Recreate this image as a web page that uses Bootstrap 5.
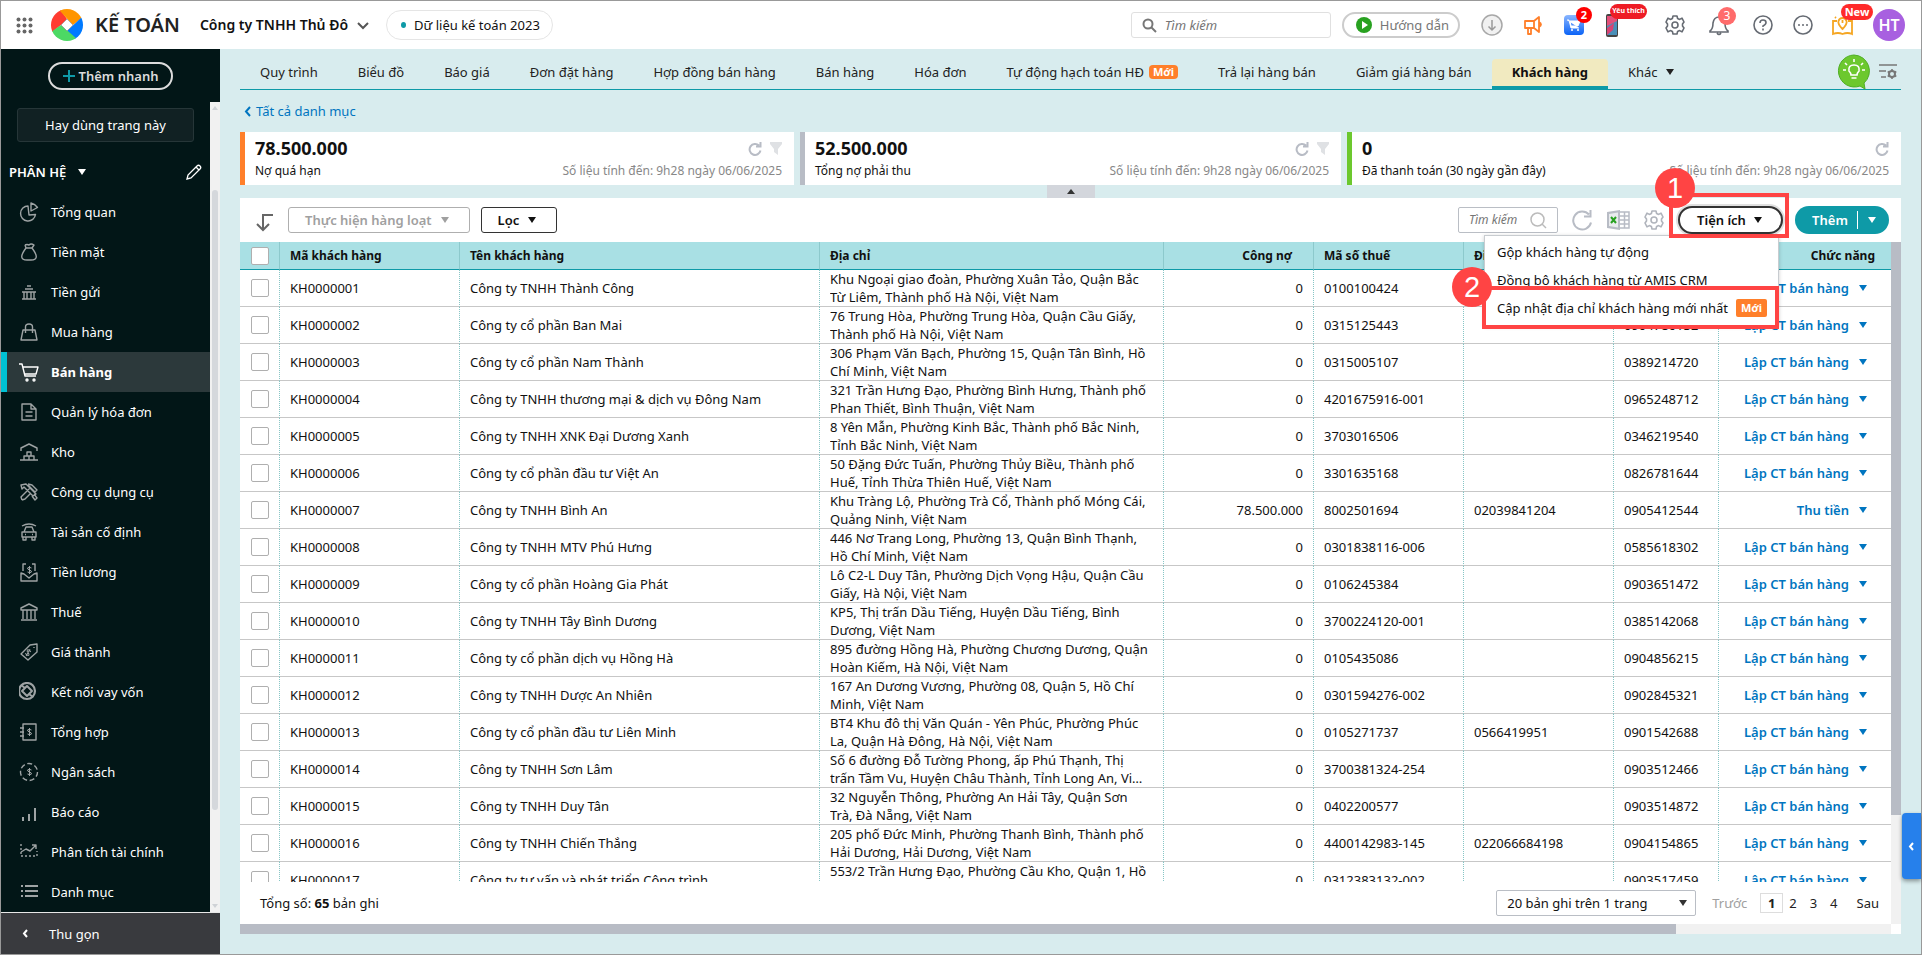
<!DOCTYPE html>
<html lang="vi">
<head>
<meta charset="utf-8">
<meta name="viewport" content="width=device-width, initial-scale=1">
<title>Kế toán - Khách hàng</title>
<link href="https://cdn.jsdelivr.net/npm/bootstrap@5.3.0/dist/css/bootstrap.min.css" rel="stylesheet">
<style>
  body { font-family: "Noto Sans", sans-serif; font-size: 13px; line-height: 18px; color: #111; }
  svg { display: block; flex: none; }
  button, input, select { font: inherit; color: inherit; }
  .semi { font-weight: 600; }
  .app { height: 100vh; border: 1px solid #999; background: #fff; overflow: hidden; }
  .caret { display: inline-block; border: 4px solid transparent; border-top: 6px solid currentColor; border-bottom: 0; flex: none; }

  /* top bar */
  .topbar { height: 48px; flex: none; padding: 0 16px 0 15px; }
  .brand-name { font-size: 20px; font-weight: 600; color: #222; }
  .company { font-size: 14px; font-weight: 600; background: none; border: 0; padding: 0; }
  .year-pill { height: 30px; border: 1px solid #e5e5e5; border-radius: 15px; background: #fff; padding: 0 12px 0 14px; }
  .dot { width: 5px; height: 6px; border-radius: 50%; background: #0e9aa7; }
  .top-search { width: 200px; height: 26px; border: 1px solid #e0e0e0; border-radius: 3px; padding: 0 10px; }
  .top-search input, .list-search input { border: 0; outline: 0; min-width: 0; width: 100%; background: none; padding: 0; }
  .top-search input::placeholder, .list-search input::placeholder { font-style: italic; color: #757575; opacity: 1; }
  .guide { height: 26px; border: 2px solid #ccc; border-radius: 13px; background: #fff; color: #777; padding: 0 9px 0 12px; }
  .icon-btn { border: 0; background: none; padding: 0; position: relative; display: flex; align-items: center; justify-content: center; }
  .bubble { position: absolute; color: #fff; font-weight: 700; text-align: center; border-radius: 9px; }
  .avatar { width: 32px; height: 32px; border-radius: 50%; background: #a860e0; color: #fff; font-weight: 600; font-size: 16px; }

  /* sidebar */
  .side { width: 219px; background: #021617; color: #fff; flex: none; }
  .quick { height: 53px; flex: none; }
  .quick button { height: 28px; width: 125px; border: 2px solid #dcdcdc; border-radius: 14px; background: none; color: #dcdcdc; font-weight: 600; padding: 0; }
  .often { margin: 6px 16px 10px; height: 34px; flex: none; border: 1px solid #263638; border-radius: 3px; background: #112123; color: #fff; padding: 0; }
  .group-head { height: 40px; flex: none; padding: 0 8px 0 8px; }
  .side-link { height: 40px; flex: none; padding-left: 18px; gap: 12px; color: #fff; text-decoration: none; }
  .side-link svg { color: #9ea3a4; }
  .side-link.current { background: #2c393b; border-left: 6px solid #00c1d4; padding-left: 12px; font-weight: 700; }
  .side-link.current svg { color: #fff; }
  .side-bar { width: 10px; background: #f1f1f1; padding: 4px 0; flex: none; }
  .side-thumb { width: 6px; height: 620px; border-radius: 3px; background: #d5d8dc; margin-top: 80px; }
  .fold { height: 42px; flex: none; background: #393a3e; border: 0; border-top: 1px solid #e8e8e8; color: #fff; padding-left: 21px; gap: 20px; }

  /* main */
  .main { background: #d8ecee; padding: 0 20px 20px 20px; }
  .main > nav, .main > a, .summary, .collapse-row, .tool, .pager-row, .hbar { flex: none; }
  .tabs { height: 41px; padding: 10px 2px 0 0; border-bottom: 1px solid #0e9aa7; }
  .tabs a { color: #222; text-decoration: none; padding: 0 20px 2px; display: flex; align-items: center; border-bottom: 3px solid transparent; }
  .tabs a.current { background: #f1eac0; border-radius: 4px 4px 0 0; border-bottom-color: #0e9aa7; font-weight: 700; color: #111; }
  .new-tag { background: #ff7f2a; color: #fff; font-weight: 700; font-size: 11px; line-height: 14px; padding: 0 5px; border-radius: 4px; }
  .tabs .new-tag { padding: 0 4px; margin-left: 5px; }
  .back { height: 42px; color: #0075c0; text-decoration: none; padding-left: 4px; }
  .summary { display: grid; grid-template-columns: 554fr 541fr 554fr; gap: 6px; }
  .sum { background: #fff; border-left: 5px solid; height: 53px; padding: 4px 12px 4px 10px; font-size: 12px; }
  .sum strong { font-size: 18px; line-height: 24px; margin-bottom: 2px; }
  .note { color: #888; }
  .collapse-row { height: 13px; }
  .collapse-row button { width: 48px; height: 13px; border: 0; background: #d3d6dc; padding: 0; color: #333; }
  .tool { height: 44px; padding: 0 12px 0 16px; }
  .obtn { height: 26px; border: 1px solid #333; border-radius: 3px; background: #fff; font-weight: 600; padding: 0 20px 0 16px; gap: 9px; }
  .obtn:disabled { border-color: #afafaf; color: #a0a0a0; }
  .list-search { width: 100px; height: 26px; border: 1px solid #babec5; border-radius: 2px; padding: 0 10px; font-size: 12px; }
  .util { width: 105px; height: 28px; border: 2px solid #333; border-radius: 14px; background: #fff; font-weight: 600; padding: 0 2px 0 0; box-shadow: 0 0 0 2px #e0e0e0; gap: 8px; }
  .add { height: 28px; width: 94px; border-radius: 14px; background: #0e9aa7; color: #fff; overflow: hidden; }
  .add button { border: 0; background: none; color: #fff; font-weight: 600; padding: 0; }
  .add .more { display: flex; align-items: center; justify-content: center; width: 32px; padding-right: 4px; border-left: 1px solid #fff; height: 18px; }

  .grid { table-layout: fixed; border-collapse: separate; border-spacing: 0; width: 100%; margin: 0; }
  .grid th { background: #a9e0e4; height: 28px; padding: 0 10px; border: 0; border-bottom: 1px solid #0e9aa7; border-right: 1px solid #8cc9cc; font-weight: 700; font-size: 12px; }
  .grid td { height: 37px; padding: 0 10px; border: 0; border-bottom: 1px solid #c7c7c7; border-right: 1px dotted #86c5c5; vertical-align: middle; white-space: nowrap; }
  .grid th:first-child, .grid td:first-child { padding-left: 11px; }
  .grid th:last-child, .grid td:last-child { border-right: 0; }
  .grid .tick { width: 18px; height: 18px; margin: 0; display: block; border: 1px solid #afafaf; border-radius: 2px; background-color: #fff; }
  .addr { display: -webkit-box; -webkit-box-orient: vertical; -webkit-line-clamp: 2; overflow: hidden; white-space: normal; margin-right: 4px; }
  .act { color: #0075c0; font-weight: 600; }
  .act a { color: inherit; text-decoration: none; }
  .act .wrap { display: flex; align-items: center; justify-content: flex-end; gap: 10px; padding-right: 14px; }
  .act button { border: 0; background: none; padding: 0; color: inherit; display: flex; }
  .pager-row { height: 42px; padding: 0 12px 0 20px; }
  .page-size { width: 200px; height: 26px; border: 1px solid #babec5; border-radius: 2px; padding: 0 10px; appearance: none; background: #fff url("data:image/svg+xml,%3Csvg xmlns='http://www.w3.org/2000/svg' width='8' height='6'%3E%3Cpath d='M0 0h8L4 6z' fill='%23333'/%3E%3C/svg%3E") no-repeat right 8px center; }
  .pager a { color: #222; text-decoration: none; }
  .pager .on { border: 1px solid #ddd; width: 23px; height: 20px; text-align: center; font-weight: 700; }
  .vbar { width: 10px; flex: none; background: #f1f1f1; }
  .vbar div { height: 84%; background: #b8bcc5; }
  .hbar { height: 10px; background: #f1f1f1; margin-right: 10px; }
  .hbar div { width: 87%; height: 10px; background: #b8bcc5; }

  /* open menu and the numbered call-outs */
  .menu { position: absolute; top: 29px; right: 4px; width: 295px; background: #fff; border: 1px solid #c8ccd0; box-shadow: 0 1px 4px rgba(0,0,0,.2); padding: 2px 0 3px; z-index: 3; white-space: nowrap; }
  .menu a { height: 28px; padding: 0 12px; color: #111; text-decoration: none; }
  .menu .new-tag { line-height: 18px; border-radius: 2px; }
  .ring { position: absolute; border: 4px solid #ff4444; z-index: 4; pointer-events: none; }
  .ring-1 { top: -13px; right: -6px; bottom: -4px; left: -9px; }
  .ring-2 { top: 50px; right: -1px; bottom: -4px; left: -3px; }
  .num { position: absolute; left: -18px; top: -29px; width: 40px; height: 40px; border-radius: 50%; background: #ff4444; color: #fff; font: 29px/40px "Liberation Sans", sans-serif; text-align: center; }
  .ring-2 .num { left: -34px; top: -23px; }
  .side-tab { position: fixed; right: 1px; bottom: 76px; width: 19px; height: 66px; border: 0; padding: 0; border-radius: 4px 0 0 4px; background: #2680eb; color: #fff; box-shadow: 0 2px 4px rgba(0,0,0,.4); }
</style>
</head>
<body>
<div class="app d-flex flex-column">
  <header class="topbar d-flex align-items-center justify-content-between">
    <div class="d-flex align-items-center">
      <button class="icon-btn me-3" aria-label="Ứng dụng"><svg width="17" height="17" fill="#666"><circle cx="2.5" cy="2.5" r="2"/><circle cx="8.5" cy="2.5" r="2"/><circle cx="14.500" cy="2.5" r="2"/><circle cx="2.5" cy="8.500" r="2"/><circle cx="8.500" cy="8.500" r="2"/><circle cx="14.500" cy="8.500" r="2"/><circle cx="2.5" cy="14.500" r="2"/><circle cx="8.500" cy="14.500" r="2"/><circle cx="14.500" cy="14.500" r="2"/></svg></button>
      <svg style="margin-left:2px" width="32" height="32" viewBox="0 0 32 32"><defs><clipPath id="disc"><circle cx="16" cy="16" r="16"/></clipPath></defs><g clip-path="url(#disc)"><path d="M0 0h9l7 10-6 6L0 24z" fill="#ff3b30"/><path d="M9 0h23v8L22 16 9 2z" fill="#ff9500"/><path d="M32 7v25h-7l-9-10z" fill="#007aff"/><path d="M0 23l10-7 16 14-4 4H0z" fill="#4cd964"/></g><path d="M16 10l6 6-6 6-6-6z" fill="#fff" stroke="#666" stroke-width="0.500"/></svg>
      <span class="brand-name ms-2 ps-1">KẾ TOÁN</span>
      <button class="company d-flex align-items-center gap-2" style="margin-left:20px">Công ty TNHH Thủ Đô <svg width="14" height="9" fill="none" stroke="#555" stroke-width="2"><path d="M2 2l5 5 5-5"/></svg></button>
      <button class="year-pill d-flex align-items-center gap-2 ms-3"><span class="dot"></span>Dữ liệu kế toán 2023</button>
    </div>
    <div class="d-flex align-items-center">
      <div class="top-search d-flex align-items-center gap-2 me-2"><svg width="15" height="15" fill="none" stroke="#777" stroke-width="2"><circle cx="6" cy="6" r="4.500"/><path d="M9.500 9.500L14 14"/></svg><input type="text" placeholder="Tìm kiếm" aria-label="Tìm kiếm"></div>
      <button class="guide d-flex align-items-center gap-2" style="margin-left:3px"><svg width="16" height="16"><circle cx="8" cy="8" r="8" fill="#28a120"/><path d="M6 4l6 4-6 4z" fill="#fff"/></svg>Hướng dẫn</button>
      <div class="d-flex align-items-center" id="topIcons">
        <button class="icon-btn" style="margin-left:21px" aria-label="Tải về"><svg width="22" height="22" fill="#f1f1f1" stroke="#a8a8a8" stroke-width="1.500"><circle cx="11" cy="11" r="10"/><path d="M11 6v10M7.500 12.500L11 16l3.500-3.500" fill="none" stroke="#999"/></svg></button>
        <button class="icon-btn" style="margin-left:21px" aria-label="Thông báo"><svg width="20" height="20" fill="none" stroke="#ff7f2a" stroke-width="1.800" stroke-linejoin="round"><path d="M1 6h9v7H1zM10 6l5-4v15l-5-4M4 13v6h3v-6M15 7q4 2.500 0 5"/></svg></button>
        <button class="icon-btn" style="margin-left:20px" aria-label="Giỏ hàng"><svg width="20" height="20"><defs><linearGradient id="bl" x2="0" y2="1"><stop stop-color="#8ab6ff"/><stop offset="1" stop-color="#0b63f6"/></linearGradient></defs><rect width="20" height="20" rx="4" fill="url(#bl)"/><path d="M3 5h2l2 8h8M6 6h10l-2 5H7z" fill="#fff" stroke="#fff"/><circle cx="8" cy="15" r="1" fill="#fff"/><circle cx="14" cy="15" r="1" fill="#fff"/></svg><span class="bubble" style="width:16px;height:16px;line-height:16px;font-size:11px;background:#f00;left:12px;top:-8px">2</span></button>
        <button class="icon-btn" style="margin-left:22px" aria-label="Yêu thích"><svg width="12" height="23"><rect x="0" y="0" width="12" height="23" rx="2" fill="#444"/><rect x="1" y="2" width="10" height="10" fill="#e44f79"/><path d="M1 12L11 7v14H1z" fill="#4a8fb8"/><path d="M1 14l7-5-1 7-6 5z" fill="#d74374"/></svg><span class="bubble" style="width:37px;height:15px;line-height:14px;font-size:7px;background:#ee1c25;left:4px;top:-10px">Yêu thích</span></button>
        <button class="icon-btn" style="margin-left:47px" aria-label="Cài đặt"><svg width="20" height="20" viewBox="0 0 20 20" fill="none" stroke="#666b73" stroke-width="1.600" stroke-linejoin="round"><path id="cog" d="M8 1h4l.6 2.500 2 .9L17 3.200 19 7l-1.500 2v2L19 13l-2 3.800-2.400-1.200-2 .9L12 19H8l-.6-2.500-2-.9L3 16.800 1 13l1.500-2V9L1 7l2-3.800 2.400 1.200 2-.9z"/><circle cx="10" cy="10" r="3"/></svg></button>
        <button class="icon-btn" style="margin-left:24px" aria-label="Chuông"><svg width="20" height="21" fill="none" stroke="#666b73" stroke-width="1.600"><path d="M1 16q3-2 3-8 1-6 6-6t6 6q0 6 3 8v1H1zM8 18q2 3 4 0"/></svg><span class="bubble" style="width:18px;height:18px;line-height:18px;font-size:12px;font-weight:400;background:#ff6b6b;left:9px;top:-8px">3</span></button>
        <button class="icon-btn" style="margin-left:24px" aria-label="Trợ giúp"><svg width="20" height="20" fill="none" stroke="#666b73" stroke-width="1.600"><circle cx="10" cy="10" r="9"/><path d="M7 8q0-3 3-3t3 2.500q0 2-3 3.500v1M10 13.500v2"/></svg></button>
        <button class="icon-btn" style="margin-left:20px" aria-label="Khác"><svg width="20" height="20" fill="none" stroke="#666b73" stroke-width="1.600"><circle cx="10" cy="10" r="9"/><path d="M5 10h2M9 10h2M13 10h2"/></svg></button>
        <button class="icon-btn" style="margin-left:19px" aria-label="Mới"><svg width="21" height="21" fill="none" stroke="#f5a623" stroke-width="1.800"><path d="M5 6H1v13q5-2 9.500 0 5-2 9.500 0V6h-4M10.500 14q-5-5-4-8 1-3 4-3t4 3q1 3-4 8zM10.500 5v3M3 2l1 1"/></svg><span class="bubble" style="width:32px;height:16px;line-height:16px;font-size:11px;background:#ff2a2a;left:9px;top:-11px">New</span></button>
        <button class="icon-btn avatar" style="margin-left:20px">HT</button>
      </div>
    </div>
  </header>

  <div class="d-flex flex-fill" style="min-height:0">
    <aside class="side d-flex flex-column">
      <div class="quick d-flex align-items-center justify-content-center"><button class="d-flex align-items-center justify-content-center gap-1"><svg width="12" height="12" stroke="#0e9aa7" stroke-width="2"><path d="M6 0v12M0 6h12"/></svg>Thêm nhanh</button></div>
      <div class="d-flex flex-fill overflow-hidden">
        <nav class="d-flex flex-column flex-fill" id="nav">
          <button class="often">Hay dùng trang này</button>
          <div class="group-head d-flex align-items-center justify-content-between"><span class="semi d-flex align-items-center gap-2">PHÂN HỆ <span class="caret ms-1"></span></span><button class="icon-btn text-white" aria-label="Sửa"><svg width="16" height="16" fill="none" stroke="currentColor" stroke-width="1.300"><path d="M1 15l1-4L11 2q1.500-1.500 3 0t0 3L5 14zM10 3l3 3"/></svg></button></div>
        </nav>
        <div class="side-bar d-flex flex-column align-items-center justify-content-between"><div class="d-flex flex-column align-items-center"><svg width="6" height="4" fill="#cfd2d6"><path d="M0 4l3-4 3 4z"/></svg><div class="side-thumb"></div></div><svg width="6" height="4" fill="#cfd2d6"><path d="M0 0l3 4 3-4z"/></svg></div>
      </div>
      <button class="fold d-flex align-items-center"><svg width="7" height="9" fill="none" stroke="#fff" stroke-width="2"><path d="M5 1L2 4.500 5 8"/></svg>Thu gọn</button>
    </aside>

    <main class="main d-flex flex-column flex-fill" style="min-width:0">
      <nav class="tabs d-flex">
        <a href="#">Quy trình</a><a href="#">Biểu đồ</a><a href="#">Báo giá</a><a href="#">Đơn đặt hàng</a><a href="#">Hợp đồng bán hàng</a><a href="#">Bán hàng</a><a href="#">Hóa đơn</a><a href="#">Tự động hạch toán HĐ<span class="new-tag">Mới</span></a><a href="#">Trả lại hàng bán</a><a href="#">Giảm giá hàng bán</a><a href="#" class="current">Khách hàng</a><a href="#">Khác<span class="caret ms-2"></span></a>
        <div class="ms-auto mb-1 d-flex align-items-center gap-2 text-nowrap">
          <button class="icon-btn" aria-label="Gợi ý"><svg width="34" height="36" viewBox="0 0 34 36"><path d="M17 1a16 16 0 1 0 6 31l5 3-1-6A16 16 0 0 0 17 1z" fill="#6cc82e" stroke="#4fae24"/><g fill="none" stroke="#fff" stroke-width="1.600"><path d="M14 21q0-2-2-4-1-6 5-6t5 6q-2 2-2 4zM14.500 24h5M17 5v3M8 9l2 2M26 9l-2 2M6 16h3M25 16h3"/></g></svg></button>
          <button class="icon-btn" aria-label="Tùy chỉnh"><svg width="20" height="16" fill="none" stroke="#777" stroke-width="1.600"><path d="M0 1h18M0 7h7M2 13h5"/><circle cx="13" cy="10" r="3" stroke-width="2"/><path d="M13 5v2M13 13v2M8.700 7.500l1.700 1M15.600 11.500l1.700 1M8.700 12.500l1.700-1M15.600 8.500l1.700-1"/></svg></button>
        </div>
      </nav>
      <a href="#" class="back d-flex align-items-center gap-1"><svg width="8" height="11" fill="none" stroke="currentColor" stroke-width="2"><path d="M6 1L2 5.500 6 10"/></svg>Tất cả danh mục</a>
      <section class="summary" id="summary"></section>
      <div class="collapse-row d-flex justify-content-center"><button class="d-flex align-items-center justify-content-center" aria-label="Thu nhỏ"><svg width="8" height="5" fill="#333"><path d="M0 5l4-5 4 5z"/></svg></button></div>

      <section class="bg-white d-flex flex-column flex-fill" style="min-height:0">
        <div class="tool d-flex align-items-center justify-content-between">
          <div class="d-flex align-items-center">
            <svg class="mt-1" width="17" height="19" fill="none" stroke="#666" stroke-width="2"><path d="M17 2H7v15M1 11l6 6 6-6"/></svg>
            <button class="obtn d-flex align-items-center" style="margin-left:15px" disabled>Thực hiện hàng loạt<span class="caret"></span></button>
            <button class="obtn d-flex align-items-center" style="margin-left:11px">Lọc<span class="caret"></span></button>
          </div>
          <div class="d-flex align-items-center">
            <div class="list-search d-flex align-items-center"><input type="text" placeholder="Tìm kiếm" aria-label="Tìm trong danh sách"><svg width="17" height="17" fill="none" stroke="#bbb" stroke-width="1.500"><circle cx="7.500" cy="7.500" r="6.500"/><path d="M12 12l4 4"/></svg></div>
            <button class="icon-btn" style="margin-left:14px" aria-label="Tải lại"><svg width="21" height="21" fill="none" stroke="#b8bcc5" stroke-width="2"><path d="M19 12.500A9 9 0 1 1 17 4.500M18.500 0v6.500H12"/></svg></button>
            <button class="icon-btn" style="margin-left:14px" aria-label="Xuất Excel"><svg width="23" height="20"><path d="M0 2L13 0v20L0 18z" fill="#b8bcc5"/><path d="M2 4l9-1.500v15L2 16z" fill="#e9ebee"/><path d="M4 7l5 6M9 7l-5 6" stroke="#28a120" stroke-width="2"/><path d="M13 2h9v16h-9M13 6h9M13 10h9M13 14h9M17.500 2v16" fill="none" stroke="#b8bcc5" stroke-width="1.500"/></svg></button>
            <button class="icon-btn" style="margin-left:14px" aria-label="Thiết lập"><svg width="20" height="20" viewBox="0 0 20 20" fill="none" stroke="#b0b4bc" stroke-width="1.600" stroke-linejoin="round"><use href="#cog"/><circle cx="10" cy="10" r="3"/></svg></button>
            <div class="position-relative" style="margin:0 12px 0 14px">
              <button class="util d-flex align-items-center justify-content-center">Tiện ích<span class="caret"></span></button>
              <div class="ring ring-1"><span class="num">1</span></div>
              <div class="menu">
                <a href="#" class="d-flex align-items-center">Gộp khách hàng tự động</a>
                <a href="#" class="d-flex align-items-center">Đồng bộ khách hàng từ AMIS CRM</a>
                <a href="#" class="d-flex align-items-center">Cập nhật địa chỉ khách hàng mới nhất<span class="new-tag ms-2">Mới</span></a>
                <div class="ring ring-2"><span class="num">2</span></div>
              </div>
            </div>
            <div class="add d-flex align-items-center"><button class="flex-fill ps-2">Thêm</button><button class="more" aria-label="Thêm lựa chọn"><span class="caret"></span></button></div>
          </div>
        </div>
        <div class="d-flex flex-fill" style="min-height:0">
          <div class="d-flex flex-column flex-fill" style="min-width:0">
            <div class="flex-fill overflow-hidden" style="min-height:0">
              <table class="grid">
                <colgroup><col style="width:40px"><col style="width:180px"><col style="width:360px"><col><col style="width:150px"><col style="width:150px"><col style="width:150px"><col style="width:105px"><col style="width:172px"></colgroup>
                <thead><tr><th><input type="checkbox" class="tick form-check-input" aria-label="Chọn tất cả"></th><th>Mã khách hàng</th><th>Tên khách hàng</th><th>Địa chỉ</th><th class="text-end" style="padding-right:21px">Công nợ</th><th>Mã số thuế</th><th>Điện thoại</th><th>Di động</th><th class="text-end pe-3">Chức năng</th></tr></thead>
                <tbody id="rows"></tbody>
              </table>
            </div>
            <div class="pager-row d-flex align-items-center justify-content-between">
              <span>Tổng số: <b>65</b> bản ghi</span>
              <div class="pager d-flex align-items-center">
                <select class="page-size me-3" aria-label="Số bản ghi"><option>20 bản ghi trên 1 trang</option></select>
                <span style="color:#a0a0a0;margin-right:13px">Trước</span><a href="#" class="on">1</a><a href="#" style="margin-left:6px">2</a><a href="#" style="margin-left:13px">3</a><a href="#" style="margin-left:13px">4</a><a href="#" style="margin-left:19px">Sau</a>
              </div>
            </div>
          </div>
          <div class="vbar"><div></div></div>
        </div>
        <div class="hbar"><div></div></div>
      </section>
    </main>
  </div>
</div>
<button class="side-tab d-flex align-items-center justify-content-center" aria-label="Mở bảng"><svg width="7" height="9" fill="none" stroke="#fff" stroke-width="2"><path d="M5 1L2 4.500 5 8"/></svg></button>

<script src="https://cdn.jsdelivr.net/npm/bootstrap@5.3.0/dist/js/bootstrap.bundle.min.js"></script>
<script>
  const dollar = '<path d="M12.500 8q-2.500-1.500-4 0 0 1.500 2 2t2 2q-1.500 1.500-4 0M10.500 6v8" stroke-width="1"/>';
  const nav = [
    ['Tổng quan', '<path d="M9 4a7.500 7.500 0 1 0 7.500 8.500L10 13z"/><path d="M12 1v8l6.500-3.500Q16 2 12 1z"/>'],
    ['Tiền mặt', '<path d="M7 6q-9 12 1 12h4q10 0 1-12zM7 6h6M6 3l1 3M6 3q2-1 4 0 2-2 5 0l-2 3"/>'],
    ['Tiền gửi', '<path d="M8 4h4M6 7h8M3 10h14M3 17h14M5 10v7M8 10v7M12 10v7M15 10v7"/>'],
    ['Mua hàng', '<path d="M4 8h12l2 10H2zM6.500 11V5q0-3 3.500-3t3.500 3v6"/>'],
    ['Bán hàng', '<path d="M0 2h3l3 12h11M4 5h15l-2 7H6"/><circle cx="8" cy="18" r="1"/><circle cx="15" cy="18" r="1"/>'],
    ['Quản lý hóa đơn', '<path d="M3 2h9l5 5v11H3zM12 2v5h5M6.500 10h7M6.500 14h7"/>'],
    ['Kho', '<path d="M2 9V6l8-4 8 4v3M1 18h18M5 18v-4h10v4M8 14v-4h4v4M10 14v4"/>'],
    ['Công cụ dụng cụ', '<path d="M2 3l5-1 10 10-3 2L5 5 3 7zM9 2l4 1 5 5-2 2-7-7M3 18l-1-3 9-9M3 18l3-1 6-6M13 14l3 4 2-2-3-4"/>'],
    ['Tài sản cố định', '<path d="M3 4q7-4 14 0M5 10l2-5h6l2 5M3 10h14v5H3zM4 15v3h3v-3M13 15v3h3v-3M6 12.500h1M13 12.500h1"/>'],
    ['Tiền lương', '<path d="M4 9V2h3M13 2h3v7M2 11v8h16v-8l-3 1-5 4-5-4z"/><g transform="translate(0 -2)">' + dollar + '</g>'],
    ['Thuế', '<path d="M2 6l8-4 8 4v2H2zM2 18h16M4 8v9M8 8v9M12 8v9M16 8v9"/>'],
    ['Giá thành', '<path d="M2 12L11 3l7-1v8l-9 8zM15 5v1"/><g transform="rotate(30 10 10) translate(-1 1)">' + dollar + '</g>'],
    ['Kết nối vay vốn', '<g transform="translate(-2 -1)"><circle cx="10" cy="10" r="8" stroke-width="2.200"/><path d="M10 5l-5 5 5 5 5-5zM4 4l4 3M16 16l-4-3" stroke-width="2"/></g>'],
    ['Tổng hợp', '<path d="M4 2h13v16H4zM1 6h4M1 10h4M1 14h4"/>' + dollar],
    ['Ngân sách', '<circle cx="10" cy="10" r="8.500" stroke-dasharray="5 2.600"/>' + dollar],
    ['Báo cáo', '<path d="M4 15v4M10 12v7M16 6v13" stroke-width="2"/>'],
    ['Phân tích tài chính', '<path d="M2 10l5-3 4 2 6-6M13 3h4v4"/><path d="M2 2v12h16V9" stroke-dasharray="2 2"/>'],
    ['Danh mục', '<path d="M6 4h13M6 9h13M6 14h13M2 4h2M2 9h2M2 14h2" stroke-width="1.800"/>']
  ];
  document.getElementById('nav').insertAdjacentHTML('beforeend', nav.map(([t, p]) =>
    `<a href="#" class="side-link d-flex align-items-center${t === 'Bán hàng' ? ' current' : ''}"><svg width="20" height="20" fill="none" stroke="currentColor" stroke-width="1.400" stroke-linejoin="round">${p}</svg>${t}</a>`).join(''));

  const reload = '<svg width="14" height="14" fill="none" stroke="#b8bcc5" stroke-width="2"><path d="M12.500 8.500A5.500 5.500 0 1 1 11 3.500M12.500 0v4.500H8"/></svg>';
  const funnel = '<svg width="12" height="13" fill="#dfe1e4"><path d="M0 0h12v2L8 7v6L4 10V7L0 2z"/></svg>';
  document.getElementById('summary').innerHTML = [
    ['78.500.000', 'Nợ quá hạn', '#ff7f2a', 1], ['52.500.000', 'Tổng nợ phải thu', '#b8bcc5', 1], ['0', 'Đã thanh toán (30 ngày gần đây)', '#6cc82e', 0]
  ].map(([n, l, c, f]) => `<div class="sum" style="border-color:${c}"><div class="d-flex justify-content-between align-items-center"><strong>${n}</strong><span class="d-flex gap-2">${reload}${f ? funnel : ''}</span></div><div class="d-flex justify-content-between"><span>${l}</span><span class="note">Số liệu tính đến: 9h28 ngày 06/06/2025</span></div></div>`).join('');

  const data = [
    ['Công ty TNHH Thành Công', 'Khu Ngoại giao đoàn, Phường Xuân Tảo, Quận Bắc Từ Liêm, Thành phố Hà Nội, Việt Nam', '0100100424', '', ''],
    ['Công ty cổ phần Ban Mai', '76 Trung Hòa, Phường Trung Hòa, Quận Cầu Giấy, Thành phố Hà Nội, Việt Nam', '0315125443', '', '0904786132'],
    ['Công ty cổ phần Nam Thành', '306 Phạm Văn Bạch, Phường 15, Quận Tân Bình, Hồ Chí Minh, Việt Nam', '0315005107', '', '0389214720'],
    ['Công ty TNHH thương mại &amp; dịch vụ Đông Nam', '321 Trần Hưng Đạo, Phường Bình Hưng, Thành phố Phan Thiết, Bình Thuận, Việt Nam', '4201675916-001', '', '0965248712'],
    ['Công ty TNHH XNK Đại Dương Xanh', '8 Yên Mẫn, Phường Kinh Bắc, Thành phố Bắc Ninh, Tỉnh Bắc Ninh, Việt Nam', '3703016506', '', '0346219540'],
    ['Công ty cổ phần đầu tư Việt An', '50 Đặng Đức Tuấn, Phường Thủy Biều, Thành phố Huế, Tỉnh Thừa Thiên Huế, Việt Nam', '3301635168', '', '0826781644'],
    ['Công ty TNHH Bình An', 'Khu Tràng Lộ, Phường Trà Cổ, Thành phố Móng Cái, Quảng Ninh, Việt Nam', '8002501694', '02039841204', '0905412544', '78.500.000', 'Thu tiền'],
    ['Công ty TNHH MTV Phú Hưng', '446 Nơ Trang Long, Phường 13, Quận Bình Thạnh, Hồ Chí Minh, Việt Nam', '0301838116-006', '', '0585618302'],
    ['Công ty cổ phần Hoàng Gia Phát', 'Lô C2-L Duy Tân, Phường Dịch Vọng Hậu, Quận Cầu Giấy, Hà Nội, Việt Nam', '0106245384', '', '0903651472'],
    ['Công ty TNHH Tây Bình Dương', 'KP5, Thị trấn Dầu Tiếng, Huyện Dầu Tiếng, Bình Dương, Việt Nam', '3700224120-001', '', '0385142068'],
    ['Công ty cổ phần dịch vụ Hồng Hà', '895 đường Hồng Hà, Phường Chương Dương, Quận Hoàn Kiếm, Hà Nội, Việt Nam', '0105435086', '', '0904856215'],
    ['Công ty TNHH Dược An Nhiên', '167 An Dương Vương, Phường 08, Quận 5, Hồ Chí Minh, Việt Nam', '0301594276-002', '', '0902845321'],
    ['Công ty cổ phần đầu tư Liên Minh', 'BT4 Khu đô thị Văn Quán - Yên Phúc, Phường Phúc La, Quận Hà Đông, Hà Nội, Việt Nam', '0105271737', '0566419951', '0901542688'],
    ['Công ty TNHH Sơn Lâm', 'Số 6 đường Đỗ Tường Phong, ấp Phú Thạnh, Thị trấn Tầm Vu, Huyện Châu Thành, Tỉnh Long An, Việt Nam', '3700381324-254', '', '0903512466'],
    ['Công ty TNHH Duy Tân', '32 Nguyễn Thông, Phường An Hải Tây, Quận Sơn Trà, Đà Nẵng, Việt Nam', '0402200577', '', '0903514872'],
    ['Công ty TNHH Chiến Thắng', '205 phố Đức Minh, Phường Thanh Bình, Thành phố Hải Dương, Hải Dương, Việt Nam', '4400142983-145', '022066684198', '0904154865'],
    ['Công ty tư vấn và phát triển Công trình', '553/2 Trần Hưng Đạo, Phường Cầu Kho, Quận 1, Hồ Chí Minh, Việt Nam', '0312383132-002', '', '0903517459']
  ];
  document.getElementById('rows').innerHTML = data.map((r, i) => {
    const code = 'KH' + String(i + 1).padStart(7, '0');
    return `<tr><td><input type="checkbox" class="tick form-check-input" aria-label="${code}"></td><td>${code}</td><td>${r[0]}</td><td><div class="addr">${r[1]}</div></td><td class="text-end">${r[5] || '0'}</td><td>${r[2]}</td><td>${r[3]}</td><td>${r[4]}</td><td class="act"><div class="wrap"><a href="#">${r[6] || 'Lập CT bán hàng'}</a><button aria-label="Thao tác khác"><span class="caret"></span></button></div></td></tr>`;
  }).join('');
</script>
</body>
</html>
